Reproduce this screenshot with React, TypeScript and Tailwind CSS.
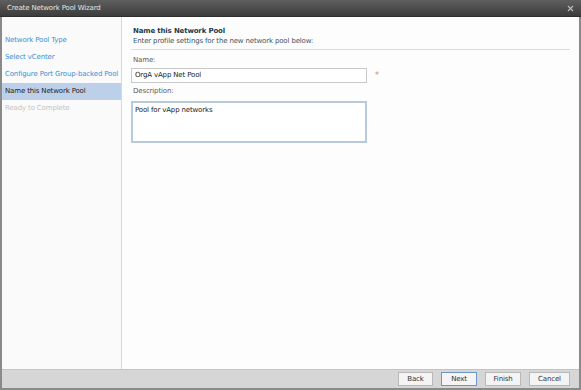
import { X } from 'lucide-react'

const steps = [
  { label: 'Network Pool Type', state: 'done' },
  { label: 'Select vCenter', state: 'done' },
  { label: 'Configure Port Group-backed Pool', state: 'done' },
  { label: 'Name this Network Pool', state: 'current' },
  { label: 'Ready to Complete', state: 'todo' },
]

export default function App() {
  return (
    <div className="w-[581px] h-[390px] flex flex-col bg-[#8a8a8a] px-[2px] pb-[2px] font-['DejaVu_Sans',sans-serif] text-[7px] tracking-[-0.15px] overflow-hidden">
      {/* title bar */}
      <div className="h-[17px] shrink-0 flex items-center justify-between pl-[7px] pr-[6px] -mx-[2px] bg-gradient-to-b from-[#5f5f5f] to-[#3c3c3c] border-b border-[#2e2e2e]">
        <span className="text-[#e6e6e6] text-[7px]">Create Network Pool Wizard</span>
        <X className="w-[9px] h-[9px] text-[#bdbdbd]" strokeWidth={3} />
      </div>

      <div className="flex flex-1 min-h-0 bg-white">
        {/* sidebar */}
        <div className="w-[120px] shrink-0 bg-[#fafafa] border-r border-[#d9d9d9] pt-[15px] flex flex-col">
          {steps.map((s) => (
            <div
              key={s.label}
              className={
                s.state === 'current'
                  ? 'h-[17px] flex items-center pl-[3px] whitespace-nowrap bg-[#bdd0ea] text-[#1b1b1b]'
                  : s.state === 'done'
                  ? 'h-[17px] flex items-center pl-[3px] whitespace-nowrap text-[#3d8fd6]'
                  : 'h-[17px] flex items-center pl-[3px] whitespace-nowrap text-[#c4c4c4]'
              }
            >
              {s.label}
            </div>
          ))}
        </div>

        {/* content */}
        <div className="flex-1 bg-[#fdfdfd] pl-[9px] pr-[9px] pt-[9px]">
          <div className="pl-[2px] font-bold text-[7px] text-[#1f3a4d] leading-[10px]">Name this Network Pool</div>
          <div className="pl-[2px] text-[#3b5566] leading-[10px] pb-[3px] border-b border-[#dcdcdc]">
            Enter profile settings for the new network pool below:
          </div>
          <div className="pl-[2px] text-[#5a5a5a] mt-[5px] leading-[10px]">Name:</div>
          <div className="flex items-center mt-[3px]">
            <div className="w-[236px] h-[15px] border border-[#c9c9c9] bg-white flex items-center pl-[3px] text-[#1b1b1b]">
              OrgA vApp Net Pool
            </div>
            <span className="ml-[8px] text-[#e07a7a] text-[8px]">*</span>
          </div>
          <div className="pl-[2px] text-[#5a5a5a] mt-[3px] leading-[10px]">Description:</div>
          <div className="w-[236px] h-[42px] mt-[5px] border-2 border-[#b9c9dc] bg-white pl-[2px] pt-[2px] text-[#1b1b1b]">
            Pool for vApp networks
          </div>
        </div>
      </div>

      {/* footer */}
      <div className="h-[19px] shrink-0 bg-[#d6d6d6] border-t border-[#c4c4c4] flex items-center justify-end gap-[8px] pr-[9px]">
        <button className="w-[35px] h-[14px] bg-[#f4f4f4] border border-[#b8b8b8] text-[#333] text-[7px]">Back</button>
        <button className="w-[36px] h-[14px] bg-[#f4f4f4] border border-[#6f95c8] text-[#333] text-[7px]">Next</button>
        <button className="w-[36px] h-[14px] bg-[#f4f4f4] border border-[#b8b8b8] text-[#333] text-[7px]">Finish</button>
        <button className="w-[41px] h-[14px] bg-[#f4f4f4] border border-[#b8b8b8] text-[#333] text-[7px]">Cancel</button>
      </div>
    </div>
  )
}
